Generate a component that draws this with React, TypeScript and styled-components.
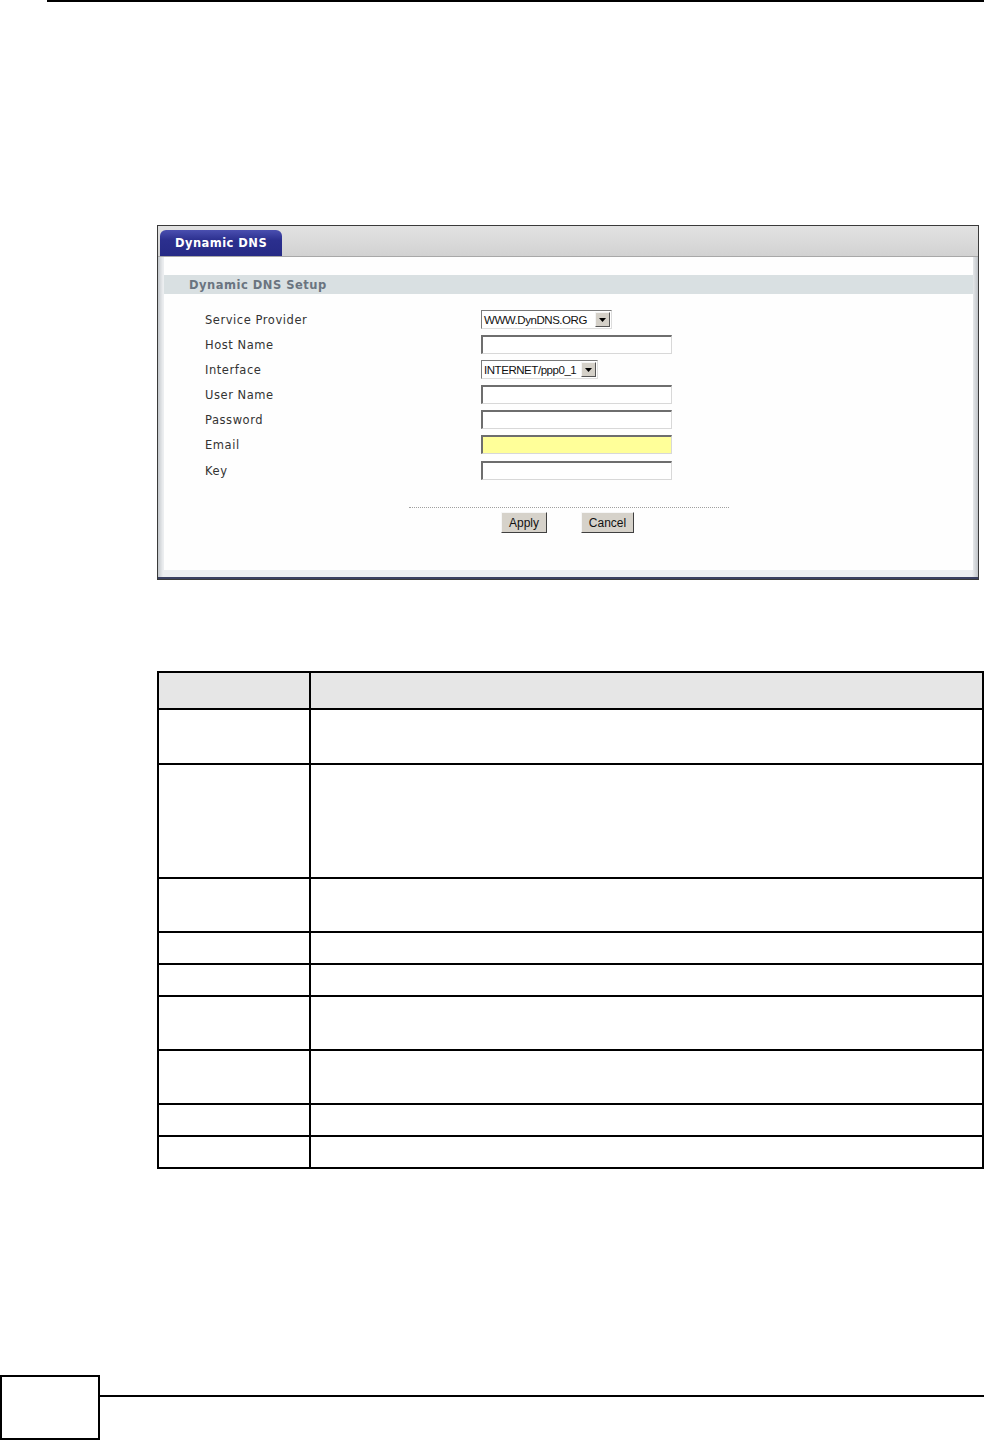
import styled, { createGlobalStyle } from 'styled-components';

const GlobalStyle = createGlobalStyle`
    html, body {
        margin: 0;
        padding: 0;
        background: #ffffff;
    }
    body {
        font-family: "DejaVu Sans", Verdana, sans-serif;
    }
`;

const Page = styled.div`
    width: 984px;
    min-height: 1440px;
    display: flex;
    flex-direction: column;
`;

const TopRule = styled.div`
    margin-left: 47px;
    height: 2px;
    background: #000;
`;

const Panel = styled.section`
    margin: 223px 0 0 157px;
    width: 820px;
    border: 1px solid #3a3a3a;
    background: linear-gradient(#e2e2e2, #d2d2d2 30px, #d8d8dc);
    display: flex;
    flex-direction: column;
`;

const TabStrip = styled.div`
    height: 30px;
    display: flex;
    align-items: flex-end;
    padding-left: 2px;
    border-bottom: 1px solid #a8a8a8;
`;

const Tab = styled.div`
    width: 122px;
    height: 26px;
    box-sizing: border-box;
    padding-left: 15px;
    display: flex;
    align-items: center;
    background: linear-gradient(#4a4fb0, #2b2f8e 40%, #262a86);
    border-radius: 6px 6px 0 0;
    color: #fff;
    font-size: 11.5px;
    font-weight: bold;
    letter-spacing: 0.45px;
`;

const Frame = styled.div`
    padding: 0 5px 7px 6px;
    background: linear-gradient(90deg, #c4c8cc, #eceef0 5px, #eceef0 calc(100% - 6px), #c0c4c8);
    border-bottom: 2px solid #3a4060;
`;

const Content = styled.div`
    background: #fefefe;
    padding-top: 18px;
    height: 313px;
    box-sizing: border-box;
`;

const SectionHead = styled.div`
    height: 19px;
    background: #d9e0e2;
    padding-left: 25px;
    display: flex;
    align-items: center;
    color: #6a7480;
    font-size: 11.5px;
    font-weight: bold;
    letter-spacing: 0.5px;
`;

const Form = styled.div`
    margin-top: 16px;
    display: grid;
    grid-template-columns: 276px 1fr;
    grid-template-rows: repeat(5, 25px) 26px 25px;
    padding-left: 41px;
`;

const Label = styled.div`
    font-size: 11.5px;
    color: #333;
    letter-spacing: 0.55px;
    line-height: 20px;
`;

const Field = styled.div`
    height: 19px;
`;

const Select = styled.div<{ $w: number }>`
    width: ${p => p.$w}px;
    height: 19px;
    box-sizing: border-box;
    border: 1px solid #7a7a7a;
    border-right-color: #dcdcdc;
    border-bottom-color: #dcdcdc;
    display: flex;
    align-items: center;
    justify-content: space-between;
    font-family: "Liberation Sans", Arial, sans-serif;
    font-size: 11.5px;
    letter-spacing: -0.45px;
    color: #111;
    padding: 0 1px 0 2px;
    background: #fff;
`;

const Arrow = styled.span`
    width: 15px;
    height: 15px;
    box-sizing: border-box;
    background: #d4d0c8;
    border: 1px solid;
    border-color: #f4f4f4 #555 #555 #f4f4f4;
    display: flex;
    align-items: center;
    justify-content: center;
`;

const Input = styled.div<{ $bg?: string }>`
    width: 191px;
    height: 19px;
    box-sizing: border-box;
    border: 2px solid #6e6e6e;
    border-right: 1px solid #d8d8d8;
    border-bottom: 1px solid #d8d8d8;
    background: ${p => p.$bg || '#fff'};
`;

const Divider = styled.div`
    margin: 21px auto 0;
    width: 320px;
    border-top: 1px dotted #a0a0a0;
`;

const Buttons = styled.div`
    margin-top: 4px;
    display: flex;
    justify-content: center;
    gap: 34px;
    padding-right: 2px;
`;

const Button = styled.div<{ $w: number }>`
    width: ${p => p.$w}px;
    height: 21px;
    box-sizing: border-box;
    background: #d6d2ca;
    border: 1px solid;
    border-color: #f6f6f6 #404040 #404040 #f6f6f6;
    display: flex;
    align-items: center;
    justify-content: center;
    font-family: "Liberation Sans", Arial, sans-serif;
    font-size: 12px;
    color: #111;
`;

const Table = styled.table`
    margin: 91px 0 0 157px;
    width: 827px;
    border-collapse: collapse;
    td {
        border: 2px solid #000;
        padding: 0;
    }
`;

const Row = styled.tr<{ $h: number; $head?: boolean }>`
    height: ${p => p.$h}px;
    background: ${p => (p.$head ? '#e6e6e6' : '#fff')};
`;

const FirstCell = styled.td`
    width: 150px;
`;

const Footer = styled.footer`
    margin-top: auto;
    display: flex;
    align-items: flex-start;
`;

const PageBox = styled.div`
    width: 100px;
    height: 65px;
    box-sizing: border-box;
    border: 2px solid #000;
`;

const FooterRule = styled.div`
    flex: 1;
    margin-top: 20px;
    height: 2px;
    background: #000;
`;

const DropArrow = () => (
    <Arrow>
        <svg width="7" height="4" viewBox="0 0 7 4">
            <path d="M0 0h7L3.5 4z" fill="#000" />
        </svg>
    </Arrow>
);

const fields = [
    { label: 'Service Provider', kind: 'select', value: 'WWW.DynDNS.ORG', w: 131 },
    { label: 'Host Name', kind: 'input' },
    { label: 'Interface', kind: 'select', value: 'INTERNET/ppp0_1', w: 117 },
    { label: 'User Name', kind: 'input' },
    { label: 'Password', kind: 'input' },
    { label: 'Email', kind: 'input', bg: '#ffff99' },
    { label: 'Key', kind: 'input' },
];

const rows = [37, 55, 114, 54, 32, 32, 54, 54, 32, 32];

const App = () => {
    return (
        <Page>
            <GlobalStyle />
            <TopRule />
            <Panel>
                <TabStrip>
                    <Tab>Dynamic DNS</Tab>
                </TabStrip>
                <Frame>
                    <Content>
                        <SectionHead>Dynamic DNS Setup</SectionHead>
                        <Form>
                            {fields.map(f => [
                                <Label key={f.label}>{f.label}</Label>,
                                <Field key={f.label + '-f'}>
                                    {f.kind === 'select' ? (
                                        <Select $w={f.w || 120}>
                                            {f.value}
                                            <DropArrow />
                                        </Select>
                                    ) : (
                                        <Input $bg={f.bg} />
                                    )}
                                </Field>,
                            ])}
                        </Form>
                        <Divider />
                        <Buttons>
                            <Button $w={46}>Apply</Button>
                            <Button $w={53}>Cancel</Button>
                        </Buttons>
                    </Content>
                </Frame>
            </Panel>
            <Table>
                <tbody>
                    {rows.map((h, i) => (
                        <Row key={i} $h={h} $head={i === 0}>
                            <FirstCell />
                            <td />
                        </Row>
                    ))}
                </tbody>
            </Table>
            <Footer>
                <PageBox />
                <FooterRule />
            </Footer>
        </Page>
    );
};

export default App;
